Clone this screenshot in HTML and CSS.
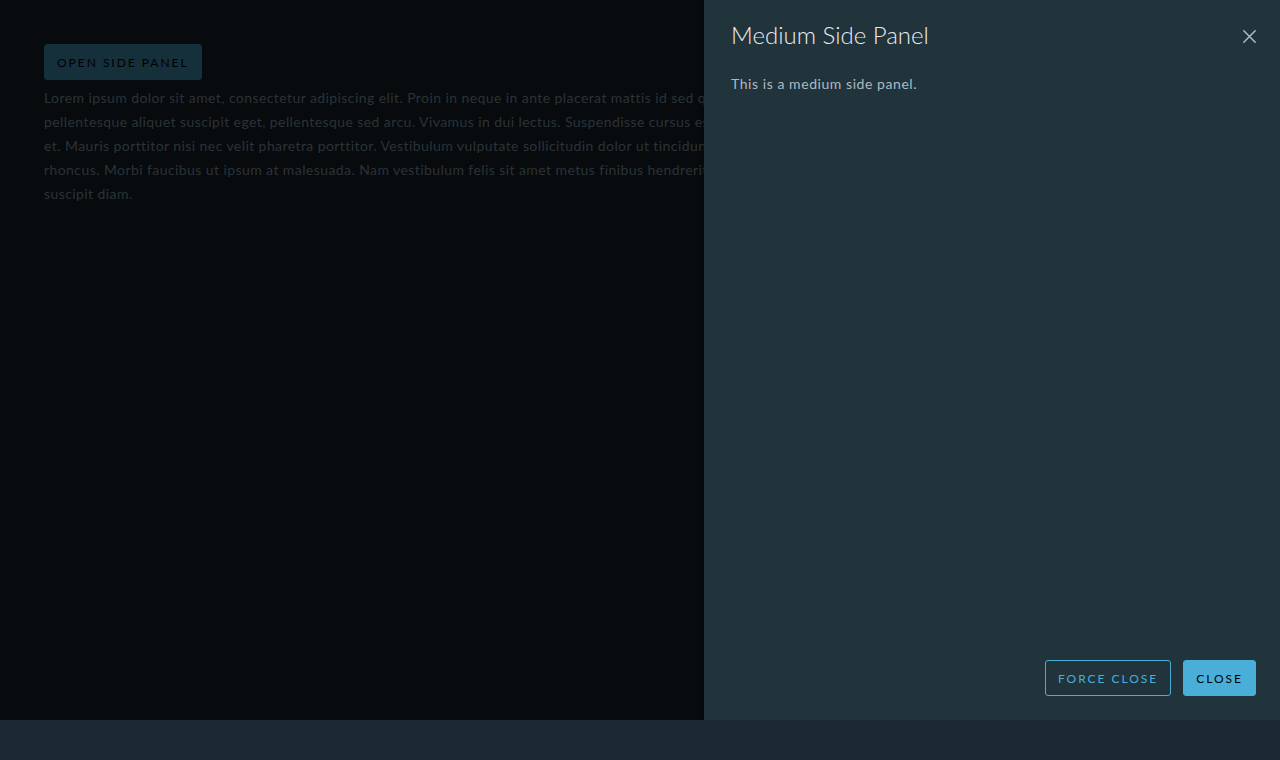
FILE: index.html
```html
<!DOCTYPE html>
<html lang="en">
<head>
<meta charset="utf-8">
<title>Side Panel</title>
<link rel="stylesheet" href="styles.css">
</head>
<body>
<div class="main">
  <div class="content dimmed">
    <button class="btn btn-primary" type="button">Open Side Panel</button>
    <p class="lorem">Lorem ipsum dolor sit amet, consectetur adipiscing elit. Proin in neque in ante placerat mattis id sed quam. Proin rhoncus lacus et tristique pulvinar. Ut at ex vitae nunc<br>pellentesque aliquet suscipit eget, pellentesque sed arcu. Vivamus in dui lectus. Suspendisse cursus est ac nisl imperdiet viverra. Aenean sagittis nibh lacus, in eleifend urna ultrices<br>et. Mauris porttitor nisi nec velit pharetra porttitor. Vestibulum vulputate sollicitudin dolor ut tincidunt. Phasellus vitae blandit felis. Nullam posuere ipsum tincidunt velit pellentesque<br>rhoncus. Morbi faucibus ut ipsum at malesuada. Nam vestibulum felis sit amet metus finibus hendrerit. Fusce faucibus odio eget ex vulputate rhoncus. Fusce nec aliquam leo, quis<br>suscipit diam.</p>
  </div>
  <aside class="side-panel">
    <div class="panel-header">
      <h3 class="panel-title">Medium Side Panel</h3>
      <button class="close" type="button" aria-label="Close">
        <svg width="13" height="13" viewBox="0 0 13 13"><path d="M0.8 0.8 L12.2 12.2 M12.2 0.8 L0.8 12.2" stroke="#b3c0c8" stroke-width="1.4" fill="none" stroke-linecap="round"/></svg>
      </button>
    </div>
    <div class="panel-body">
      <p>This is a medium side panel.</p>
    </div>
    <div class="panel-footer">
      <button class="btn btn-outline" type="button">Force Close</button>
      <button class="btn btn-primary" type="button">Close</button>
    </div>
  </aside>
</div>
</body>
</html>
```

FILE: styles.css
```css
html, body {
  margin: 0;
  padding: 0;
  background: #1b2a32;
  font-family: "Lato", "Noto Sans", sans-serif;
}

.main {
  position: relative;
  height: 720px;
  background: #070b0e;
}

.content {
  padding: 44px 44px 0 44px;
}

.btn {
  height: 36px;
  padding: 0 12px;
  border-radius: 3px;
  font-family: inherit;
  font-size: 12px;
  font-weight: 400;
  letter-spacing: 0.165em;
  text-transform: uppercase;
  cursor: pointer;
  box-sizing: border-box;
}

.btn-primary {
  background: #49afd9;
  border: 1px solid #49afd9;
  color: #000;
}

.btn-outline {
  background: transparent;
  border: 1px solid #49afd9;
  color: #49afd9;
}

.lorem {
  margin: 6px 0 0 0;
  font-size: 14px;
  line-height: 24px;
  letter-spacing: 0.03em;
  color: #acbac3;
}

/* page content seen through the side panel's backdrop */
.dimmed .btn-primary {
  background: #16303b;
  border-color: #16303b;
  color: #000;
}

.dimmed .lorem {
  color: #2b3337;
}

.side-panel {
  position: absolute;
  top: 0;
  right: 0;
  width: 576px;
  height: 720px;
  box-sizing: border-box;
  background: #21333b;
  display: flex;
  flex-direction: column;
  padding: 18px 24px 24px 27px;
  box-shadow: 0 2px 4px rgba(0, 0, 0, 0.35);
}

.panel-header {
  display: flex;
  align-items: center;
  justify-content: space-between;
}

.panel-title {
  margin: 0;
  font-size: 24px;
  line-height: 34px;
  font-weight: 300;
  color: #e9ecef;
}

.close {
  background: none;
  border: 0;
  padding: 0;
  width: 13px;
  height: 13px;
  margin-top: 2px;
  display: flex;
  cursor: pointer;
}

.panel-body {
  flex: 1;
  padding-top: 20px;
}

.panel-body p {
  margin: 0;
  font-size: 14px;
  line-height: 24px;
  letter-spacing: 0.04em;
  color: #acbac3;
}

.panel-footer {
  display: flex;
  justify-content: flex-end;
  gap: 12px;
}
```
